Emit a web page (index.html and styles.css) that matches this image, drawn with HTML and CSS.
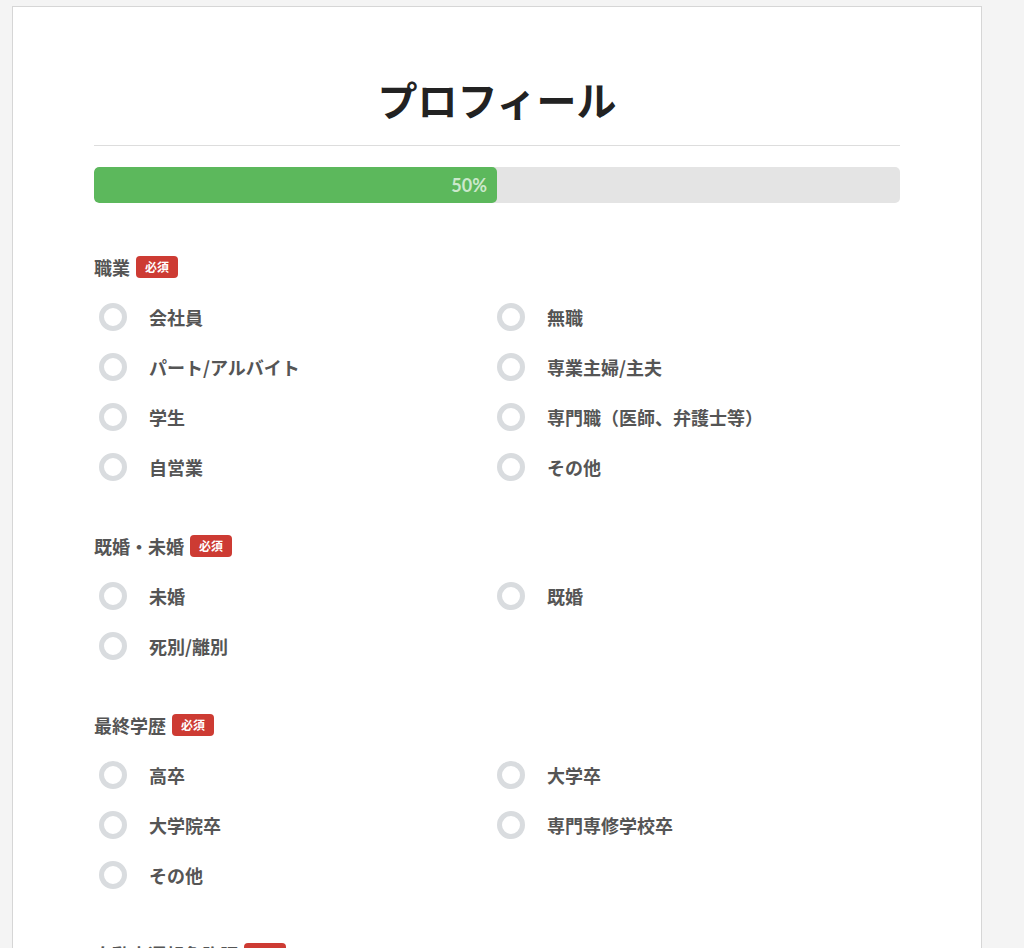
FILE: index.html
```html
<!DOCTYPE html>
<html lang="ja">
<head>
  <meta charset="UTF-8">
  <meta name="viewport" content="width=device-width, initial-scale=1.0">
  <title>プロフィール</title>
  <link rel="stylesheet" href="styles.css">
</head>
<body>
  <div class="card">
    <h1 class="title">プロフィール</h1>

    <div class="progress">
      <div class="progress-fill" style="width: 50%">50%</div>
    </div>

    <section class="field">
      <div class="field-label">職業 <span class="required">必須</span></div>
      <div class="options">
        <label class="option"><input type="radio" name="job"><span class="radio"></span>会社員</label>
        <label class="option"><input type="radio" name="job"><span class="radio"></span>無職</label>
        <label class="option"><input type="radio" name="job"><span class="radio"></span>パート/アルバイト</label>
        <label class="option"><input type="radio" name="job"><span class="radio"></span>専業主婦/主夫</label>
        <label class="option"><input type="radio" name="job"><span class="radio"></span>学生</label>
        <label class="option"><input type="radio" name="job"><span class="radio"></span>専門職（医師、弁護士等）</label>
        <label class="option"><input type="radio" name="job"><span class="radio"></span>自営業</label>
        <label class="option"><input type="radio" name="job"><span class="radio"></span>その他</label>
      </div>
    </section>

    <section class="field">
      <div class="field-label">既婚・未婚 <span class="required">必須</span></div>
      <div class="options">
        <label class="option"><input type="radio" name="marriage"><span class="radio"></span>未婚</label>
        <label class="option"><input type="radio" name="marriage"><span class="radio"></span>既婚</label>
        <label class="option"><input type="radio" name="marriage"><span class="radio"></span>死別/離別</label>
      </div>
    </section>

    <section class="field">
      <div class="field-label">最終学歴 <span class="required">必須</span></div>
      <div class="options">
        <label class="option"><input type="radio" name="education"><span class="radio"></span>高卒</label>
        <label class="option"><input type="radio" name="education"><span class="radio"></span>大学卒</label>
        <label class="option"><input type="radio" name="education"><span class="radio"></span>大学院卒</label>
        <label class="option"><input type="radio" name="education"><span class="radio"></span>専門専修学校卒</label>
        <label class="option"><input type="radio" name="education"><span class="radio"></span>その他</label>
      </div>
    </section>

    <section class="field">
      <div class="field-label">自動車運転免許証 <span class="required">必須</span></div>
      <div class="options">
        <label class="option"><input type="radio" name="license"><span class="radio"></span>あり</label>
        <label class="option"><input type="radio" name="license"><span class="radio"></span>なし</label>
      </div>
    </section>
  </div>
</body>
</html>
```

FILE: styles.css
```css
:root {
  --text-color: #555555;
  --title-color: #222222;
  --line-color: #dddddd;
  --progress-bg: #e4e4e4;
  --progress-fill: #5cb85c;
  --required-color: #cd3b33;
  --radio-color: #d9dcdf;
}

body {
  margin: 0;
  background-color: #f4f4f4;
  font-family: 'Noto Sans CJK JP', 'Noto Sans', sans-serif;
  color: var(--text-color);
}

.card {
  box-sizing: border-box;
  width: 970px;
  margin: 6px 0 0 12px;
  padding: 68px 81px 60px;
  background-color: #ffffff;
  border: 1px solid #d6d6d6;
}

.title {
  margin: 0;
  padding-bottom: 22px;
  border-bottom: 1px solid var(--line-color);
  font-size: 40px;
  line-height: 48px;
  font-weight: bold;
  text-align: center;
  color: var(--title-color);
}

.progress {
  height: 36px;
  margin-top: 21px;
  border-radius: 5px;
  background-color: var(--progress-bg);
  overflow: hidden;
}

.progress-fill {
  box-sizing: border-box;
  height: 100%;
  padding-right: 10px;
  border-radius: 5px;
  background-color: var(--progress-fill);
  color: rgba(255, 255, 255, 0.7);
  font-family: 'Lato', sans-serif;
  font-weight: bold;
  font-size: 18px;
  line-height: 36px;
  text-align: right;
}

.field {
  margin-top: 42px;
}

.progress + .field {
  margin-top: 52px;
}

.field-label {
  display: flex;
  align-items: center;
  gap: 6px;
  height: 24px;
  margin-bottom: 13px;
  font-size: 18px;
  font-weight: bold;
}

.required {
  padding: 0 9px;
  border-radius: 4px;
  background-color: var(--required-color);
  color: #ffffff;
  font-size: 12px;
  line-height: 22px;
  font-weight: bold;
}

.options {
  display: grid;
  grid-template-columns: 398px 1fr;
  padding-left: 5px;
}

.option {
  display: flex;
  align-items: center;
  gap: 22px;
  height: 50px;
  font-size: 18px;
  font-weight: bold;
  cursor: pointer;
}

.option input {
  display: none;
}

.radio {
  box-sizing: border-box;
  width: 28px;
  height: 28px;
  border: 5px solid var(--radio-color);
  border-radius: 50%;
  background-color: #ffffff;
}

.option input:checked + .radio {
  border-color: var(--progress-fill);
}
```
